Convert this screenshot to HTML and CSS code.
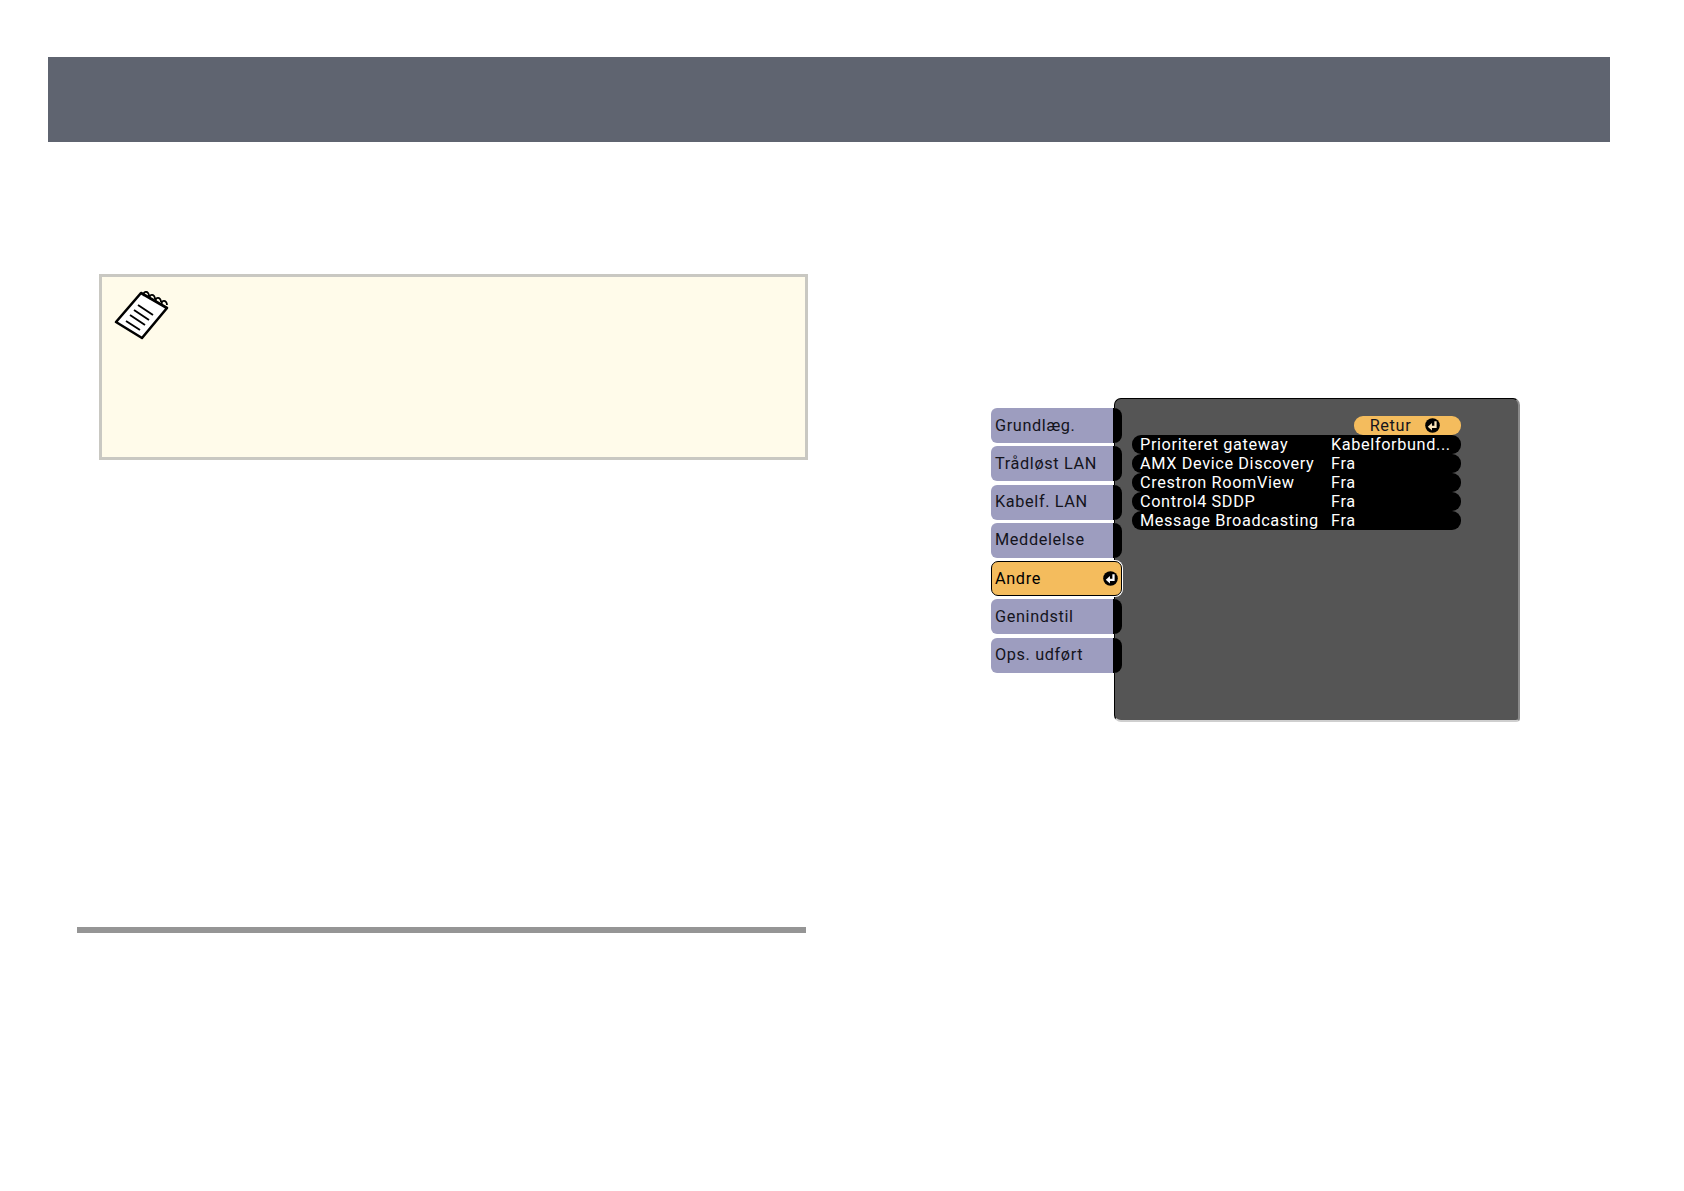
FILE: index.html
```html
<!DOCTYPE html>
<html lang="da">
<head>
<meta charset="utf-8">
<title>Andre</title>
<link rel="stylesheet" href="styles.css">
</head>
<body>
<svg class="sprite" width="0" height="0" aria-hidden="true">
  <symbol id="enter" viewBox="0 0 16 16">
    <circle cx="8" cy="8" r="7.8" fill="#000"/>
    <path d="M11.2 3.4V9.4H6" fill="none" stroke="currentColor" stroke-width="2.4"/>
    <path d="M7.4 5.4 3 9.4 7.4 13.2Z" fill="currentColor"/>
  </symbol>
</svg>
<header class="top-band"></header>
<main class="columns">
  <section class="left-col">
    <div class="note">
      <svg class="note-icon" viewBox="0 0 56 50" aria-hidden="true">
        <path d="M27 2 2 31 28 47 53 17Z" fill="#fff" stroke="#000" stroke-width="2.6" stroke-linejoin="round"/>
        <path d="M24 14 39 24M20 19 35 29M16 24 31 34M12 30 26 39" fill="none" stroke="#000" stroke-width="1.9"/>
        <path d="M30 5c-2-5 5-6 5 0M36 8c-2-5 5-6 5 0M42 11c-2-5 5-6 5 0M48 14c-2-5 5-6 5 0" fill="none" stroke="#000" stroke-width="1.8"/>
      </svg>
    </div>
    <hr class="rule">
  </section>
  <section class="right-col">
    <div class="osd">
      <nav class="tabs">
        <div class="tab">Grundlæg.</div>
        <div class="tab">Trådløst LAN</div>
        <div class="tab">Kabelf. LAN</div>
        <div class="tab">Meddelelse</div>
        <div class="tab tab-active">Andre<svg class="enter enter-tab"><use href="#enter"/></svg></div>
        <div class="tab">Genindstil</div>
        <div class="tab">Ops. udført</div>
      </nav>
      <div class="panel">
        <div class="back-row">
          <div class="back">Retur<svg class="enter enter-back"><use href="#enter"/></svg></div>
        </div>
        <div class="row"><span class="row-label">Prioriteret gateway</span><span>Kabelforbund...</span></div>
        <div class="row"><span class="row-label">AMX Device Discovery</span><span>Fra</span></div>
        <div class="row"><span class="row-label">Crestron RoomView</span><span>Fra</span></div>
        <div class="row"><span class="row-label">Control4 SDDP</span><span>Fra</span></div>
        <div class="row"><span class="row-label">Message Broadcasting</span><span>Fra</span></div>
      </div>
    </div>
  </section>
</main>
</body>
</html>
```
FILE: styles.css
```css
* { box-sizing: border-box; }
html, body { margin: 0; padding: 0; background: #fff; }
body { width: 1684px; height: 1191px; overflow: hidden; font-family: Roboto, "Liberation Sans", sans-serif; font-weight: 400; }
.sprite { display: block; height: 0; }

.top-band { height: 85px; width: 1562px; margin: 57px 0 0 48px; background: #5f6470; }

.columns { display: grid; grid-template-columns: 808px 1fr; }

.left-col { padding: 132px 0 0 76px; }
.note { width: 709px; height: 186px; margin-left: 23px; padding: 14px 0 0 12px; background: #fffbea; border: 3px solid #c9c8c2; }
.note-icon { display: block; width: 56px; height: 50px; }
.rule { height: 6px; width: 729px; margin: 467px 0 0 1px; border: 0; background: #959595; }

.right-col { padding: 256px 0 0 183px; }
.osd { display: flex; align-items: flex-start; }
.tabs { position: relative; z-index: 1; display: flex; flex-direction: column; gap: 3.3px; width: 131px; margin-right: -8px; padding-top: 10px; }
.tab { display: flex; align-items: center; justify-content: space-between; height: 35px; padding: 0 0 1px 4px; font-size: 16.3px; letter-spacing: .62px; color: #14141c; background: #9d9dbf; border-right: 9px solid #000; border-radius: 6px 8px 8px 6px; }
.tab-active { padding: 0 3px 1px 3px; background: #f4bc5d; border: 1px solid #000; border-radius: 7px; box-shadow: 0 0 0 1px #fff; color: #000; }
.enter { display: block; flex: none; width: 15px; height: 15px; }
.enter-tab { color: #fff; }
.enter-back { color: #fde7bd; margin-left: 14px; }

.panel { display: flex; flex-direction: column; width: 406px; height: 324px; padding: 17px 0 0 17px; background: #555; border-top: 1px solid #000; border-left: 1px solid #000; border-right: 2px solid #8a8a8a; border-bottom: 2px solid #cfcfcf; border-radius: 7px 7px 4px 7px; }
.back-row { display: flex; justify-content: flex-end; padding-right: 57px; }
.back { display: flex; align-items: center; justify-content: center; width: 107px; height: 19px; padding: 0 5px 1px 0; font-size: 16.3px; letter-spacing: .62px; color: #14141c; background: #f4bc5d; border-radius: 9px; }
.row { display: flex; align-items: center; width: 329px; height: 19.1px; padding: 0 0 1px 8px; font-size: 16.3px; letter-spacing: .62px; color: #fff; background: #000; border-radius: 9px; white-space: nowrap; }
.row-label { width: 191px; }
```
